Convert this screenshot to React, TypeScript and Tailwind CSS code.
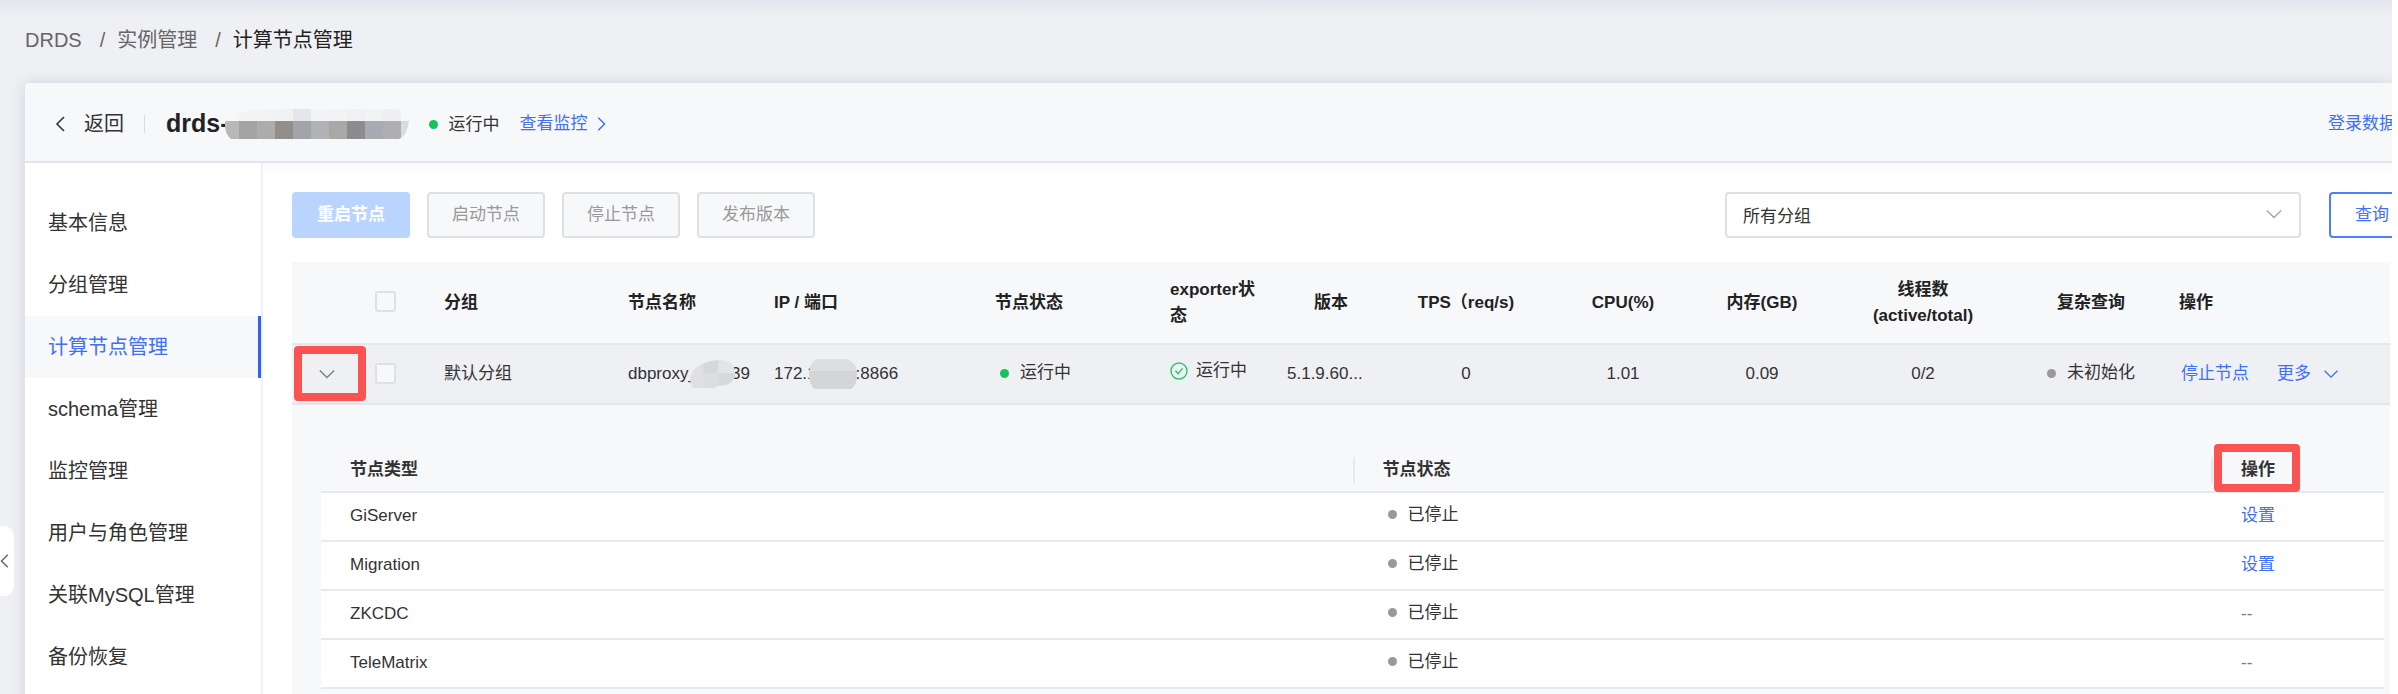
import React from 'react';

type StatusColor = 'green' | 'gray';

interface NodeType {
  name: string;
  status: string;
  configurable: boolean;
}

const menuItems = [
  '基本信息',
  '分组管理',
  '计算节点管理',
  'schema管理',
  '监控管理',
  '用户与角色管理',
  '关联MySQL管理',
  '备份恢复',
];

const nodeTypes: NodeType[] = [
  { name: 'GiServer', status: '已停止', configurable: true },
  { name: 'Migration', status: '已停止', configurable: true },
  { name: 'ZKCDC', status: '已停止', configurable: false },
  { name: 'TeleMatrix', status: '已停止', configurable: false },
];

const chevronPaths = {
  left: 'M12 3 L5 10 L12 17',
  right: 'M7 3 L14 10 L7 17',
  down: 'M2 6 L10 14 L18 6',
};

const Chevron: React.FC<{ dir: keyof typeof chevronPaths; className?: string }> = ({ dir, className }) => (
  <svg viewBox="0 0 20 20" fill="none" stroke="currentColor" strokeWidth="1.6" className={className} aria-hidden="true">
    <path d={chevronPaths[dir]} />
  </svg>
);

const CheckCircle: React.FC = () => (
  <svg viewBox="0 0 18 18" fill="none" stroke="#2fc46b" strokeWidth="1.4" className="w-[18px] h-[18px]" aria-hidden="true">
    <circle cx="9" cy="9" r="8" />
    <path d="M5.4 8.8 L8.2 11.6 L12.6 6.4" />
  </svg>
);

const Status: React.FC<{ color: StatusColor; children: React.ReactNode }> = ({ color, children }) => (
  <span className="inline-flex items-center gap-[11px] whitespace-nowrap">
    <span className={`w-[9px] h-[9px] rounded-full ${color === 'green' ? 'bg-[#16c35b]' : 'bg-[#999999]'}`} />
    {children}
  </span>
);

// Mosaic over the instance id
const topTiles = ['#f5f6f7', '#f3f4f5', '#f2f3f5', '#f1f2f4', '#e5e6e9', '#f3f4f5', '#f2f3f4', '#f0f1f3', '#f2f3f5', '#eeeff0', '#f5f6f7'];
const bottomTiles = ['#b9b7b8', '#a3a3a3', '#acacac', '#928e8c', '#a3a4ab', '#b0b2b5', '#aaa8a6', '#8c8c8e', '#a7abb2', '#b0aeb0', '#d9dbe2'];

const IdMosaic: React.FC = () => (
  <svg width="184" height="30" viewBox="0 0 184 30" aria-hidden="true">
    <defs>
      <clipPath id="id-mosaic">
        <path d="M0 13 L14 3 L40 0 H172 Q177 2 177 12 H184 Q182 27 174 30 H6 Q1 26 0 18 Z" />
      </clipPath>
    </defs>
    <g clipPath="url(#id-mosaic)">
      {topTiles.map((c, i) => (
        <rect key={`t${i}`} x={i * 18 - 4} y="0" width="18" height="12" fill={c} />
      ))}
      {bottomTiles.map((c, i) => (
        <rect key={`b${i}`} x={i * 18 - 4} y="12" width="18" height="18" fill={c} />
      ))}
    </g>
  </svg>
);

const NameMosaic: React.FC = () => (
  <svg width="54" height="34" viewBox="0 0 54 34" className="relative -ml-2 -mr-1" aria-hidden="true">
    <clipPath id="name-mosaic">
      <path d="M0 24 Q2 8 20 3 Q38 -3 50 5 Q56 14 53 22 Q48 31 34 31 L28 34 H4 Q1 31 0 24 Z" />
    </clipPath>
    <g clipPath="url(#name-mosaic)">
      <rect width="54" height="34" fill="#dfe0e2" />
      <rect x="16" width="18" height="16" fill="#d6d7d9" />
      <rect x="34" width="20" height="16" fill="#e3e4e6" />
      <rect x="16" y="16" width="18" height="18" fill="#dcdddf" />
      <rect x="34" y="16" width="20" height="18" fill="#d7d8da" />
    </g>
  </svg>
);

const IpMosaic: React.FC = () => (
  <svg width="48" height="30" viewBox="0 0 48 30" className="relative -ml-2 -mr-px" aria-hidden="true">
    <clipPath id="ip-mosaic">
      <path d="M8 0 H38 Q48 4 48 14 Q48 26 42 30 H6 Q0 26 0 14 Q1 3 8 0 Z" />
    </clipPath>
    <g clipPath="url(#ip-mosaic)">
      <rect width="48" height="30" fill="#dcdee1" />
      <rect y="12" width="48" height="18" fill="#d4d5d7" />
    </g>
  </svg>
);

const Checkbox: React.FC<{ label: string }> = ({ label }) => (
  <input
    type="checkbox"
    aria-label={label}
    className="block appearance-none w-[21px] h-[21px] mb-0.5 rounded-[3px] border-2 border-[#dfe0e3] bg-[#f7f8fa]"
  />
);

const Highlight: React.FC<{ className: string }> = ({ className }) => (
  <span className={`absolute pointer-events-none ${className}`}>
    <span className="block w-full h-full border-8 border-[#fb5252] rounded-[4px]" />
  </span>
);

const NodeTypeTable: React.FC = () => (
  <table className="w-full table-fixed border-collapse text-left">
    <colgroup>
      <col className="w-1/2" />
      <col />
      <col className="w-[173px]" />
    </colgroup>
    <thead>
      <tr className="h-[46px] border-b-2 border-[#e8e9ef]">
        <th className="pl-[29px] pt-0.5 font-bold">节点类型</th>
        <th className="pt-0.5 font-bold">
          <div className="border-l-2 border-[#e8e9ee] pl-7">节点状态</div>
        </th>
        <th className="relative pt-0.5 font-bold">
          <div className="border-l-2 border-[#e8e9ee] pl-7">操作</div>
          <Highlight className="left-[3px] -top-0.5 w-[86px] h-[48px]" />
        </th>
      </tr>
    </thead>
    <tbody>
      {nodeTypes.map((node) => (
        <tr key={node.name} className="h-[49px] bg-white border-b-2 border-[#e8e9ef]">
          <td className="pl-[29px] pb-0.5">{node.name}</td>
          <td className="pl-[35px] pb-1">
            <Status color="gray">{node.status}</Status>
          </td>
          <td className="pl-[30px] pb-0.5">
            {node.configurable ? (
              <a href="#" className="text-[#3e6ff5]">设置</a>
            ) : (
              <span className="text-[#777777]">--</span>
            )}
          </td>
        </tr>
      ))}
    </tbody>
  </table>
);

const NodeTable: React.FC = () => (
  <table className="w-full table-fixed border-collapse text-[17px] leading-[26px] text-[#333333]">
    <colgroup>
      <col className="w-[70px]" />
      <col className="w-[70px]" />
      <col className="w-[184px]" />
      <col className="w-[146px]" />
      <col className="w-[221px]" />
      <col className="w-[175px]" />
      <col className="w-[117px]" />
      <col className="w-[112px]" />
      <col className="w-[158px]" />
      <col className="w-[156px]" />
      <col className="w-[122px]" />
      <col className="w-[200px]" />
      <col className="w-[144px]" />
      <col />
    </colgroup>
    <thead>
      <tr className="h-[82px] bg-[#f7f8fa] border-b-2 border-[#e4e6ec] text-left text-[#222222]">
        <th />
        <th className="px-[13px]"><Checkbox label="全选" /></th>
        <th className="px-3 font-bold">分组</th>
        <th className="px-3 font-bold">节点名称</th>
        <th className="px-3 font-bold">IP / 端口</th>
        <th className="px-3 font-bold">节点状态</th>
        <th className="px-3 font-bold">exporter状态</th>
        <th className="px-3 font-bold text-center">版本</th>
        <th className="px-3 font-bold text-center">TPS（req/s)</th>
        <th className="px-3 font-bold text-center">CPU(%)</th>
        <th className="px-3 font-bold text-center">内存(GB)</th>
        <th className="px-3 font-bold text-center">线程数<br />(active/total)</th>
        <th className="pl-2 pr-4 font-bold text-center">复杂查询</th>
        <th className="px-3 font-bold">操作</th>
      </tr>
    </thead>
    <tbody>
      <tr className="h-[60px] bg-[#eff0f4] border-b-2 border-[#e4e6ec]">
        <td className="relative">
          <button type="button" aria-label="收起" className="block mx-auto text-[#808080]">
            <Chevron dir="down" className="w-[18px] h-[18px]" />
          </button>
          <Highlight className="left-0.5 top-px w-[72px] h-[55px]" />
        </td>
        <td className="px-[13px]"><Checkbox label="选择默认分组" /></td>
        <td className="px-3">默认分组</td>
        <td className="px-3">
          <div className="flex items-center">
            dbproxy_<NameMosaic />39
          </div>
        </td>
        <td className="px-3">
          <div className="flex items-center">
            172.1<IpMosaic />:8866
          </div>
        </td>
        <td className="pl-[17px] pb-0.5"><Status color="green">运行中</Status></td>
        <td className="px-3 pb-0.5">
          <span className="inline-flex items-center gap-2 whitespace-nowrap">
            <CheckCircle />
            运行中
          </span>
        </td>
        <td className="px-3">5.1.9.60...</td>
        <td className="px-3 text-center">0</td>
        <td className="px-3 text-center">1.01</td>
        <td className="px-3 text-center">0.09</td>
        <td className="px-3 text-center">0/2</td>
        <td className="pl-2 pr-4 pb-0.5 text-center"><Status color="gray">未初始化</Status></td>
        <td className="pl-[14px]">
          <div className="flex items-center gap-7 text-[#3e6ff5]">
            <a href="#">停止节点</a>
            <button type="button" className="flex items-center gap-3">
              更多
              <Chevron dir="down" className="w-4 h-4" />
            </button>
          </div>
        </td>
      </tr>
      <tr className="bg-[#f7f8fa]">
        <td colSpan={14} className="pl-[29px] pr-1.5 pt-[41px] pb-5">
          <NodeTypeTable />
        </td>
      </tr>
    </tbody>
  </table>
);

const Toolbar: React.FC = () => (
  <div className="flex items-center gap-[17px] -mr-[25px] text-[17px]">
    <button type="button" className="h-[46px] w-[118px] rounded-[4px] bg-[#b9d5ff] text-white font-bold">重启节点</button>
    <button type="button" disabled className="h-[46px] w-[118px] rounded-[4px] border-2 border-[#dfe0e2] bg-[#f7f8fa] text-[#999999]">启动节点</button>
    <button type="button" disabled className="h-[46px] w-[118px] rounded-[4px] border-2 border-[#dfe0e2] bg-[#f7f8fa] text-[#999999]">停止节点</button>
    <button type="button" disabled className="h-[46px] w-[118px] rounded-[4px] border-2 border-[#dfe0e2] bg-[#f7f8fa] text-[#999999]">发布版本</button>
    <div className="relative ml-auto mr-[11px] w-[576px]">
      <select aria-label="分组" className="block appearance-none w-full h-[46px] rounded-[4px] border-2 border-[#dfe0e2] bg-white pl-4 pt-1 text-[#333333]">
        <option>所有分组</option>
      </select>
      <Chevron dir="down" className="absolute right-[18px] top-[13px] w-[18px] h-[18px] text-[#a6a6a6]" />
    </div>
    <button type="button" className="h-[46px] w-[86px] shrink-0 rounded-[4px] border-2 border-[#4f7ff7] bg-white text-[#3e6ff5]">查询</button>
  </div>
);

const App: React.FC = () => (
  <div className="min-h-screen flex bg-white pr-1.5 font-['Liberation_Sans','Noto_Sans_CJK_SC',sans-serif] text-[#333333]">
    <div className="relative flex-1 min-w-0 flex flex-col overflow-hidden bg-[#eff0f4] pl-[25px]">
      <div className="absolute inset-x-0 top-0 h-4 bg-linear-to-b from-[#e3e6f0] to-[#eff0f4]" />
      <nav className="relative flex items-center h-[83px] pb-1 text-[20px] text-[#666666]">
        <a href="#">DRDS</a>
        <span className="ml-[18px] mr-3">/</span>
        <a href="#">实例管理</a>
        <span className="ml-[18px] mr-3">/</span>
        <span className="text-[#222222]">计算节点管理</span>
      </nav>

      <div className="relative flex-1 flex flex-col rounded-tl-[4px] bg-white shadow-[0_0_14px_rgba(60,70,110,0.16)]">
        <header className="flex items-center h-[80px] pl-[27px] pt-1 rounded-tl-[4px] bg-[#f7f8fa] border-b-2 border-[#e1e4ee]">
          <button type="button" className="flex items-center gap-3 text-[20px]">
            <Chevron dir="left" className="w-5 h-5" />
            返回
          </button>
          <span className="w-px h-[18px] ml-[20px] mr-[21px] bg-[#d9dce6]" />
          <h1 className="flex items-center text-[25px] font-bold text-[#222222]">
            drds-
            <span className="relative -ml-1"><IdMosaic /></span>
          </h1>
          <span className="ml-5 text-[17px]"><Status color="green">运行中</Status></span>
          <a href="#" className="flex items-center ml-5 text-[17px] text-[#3e6ff5]">
            查看监控
            <Chevron dir="right" className="w-[18px] h-[18px] ml-1" />
          </a>
          <a href="#" className="ml-auto -mr-1 shrink-0 text-[17px] text-[#3e6ff5]">登录数据</a>
        </header>

        <div className="flex-1 flex">
          <aside className="w-[238px] shrink-0 pt-[29px] border-r-2 border-[#f0f1f4]">
            {menuItems.map((item) => (
              <a
                key={item}
                href="#"
                className={
                  item === '计算节点管理'
                    ? 'flex items-center h-[62px] pl-[23px] text-[20px] bg-[#f7f8fa] border-r-3 border-[#2f62f0] text-[#3e6ff5]'
                    : 'flex items-center h-[62px] pl-[23px] text-[20px] text-[#333333]'
                }
              >
                {item}
              </a>
            ))}
          </aside>
          <main className="flex-1 min-w-0 pl-[29px] pr-0.5 pt-[29px] bg-linear-to-b from-[#fafafb] via-white via-3% to-white">
            <Toolbar />
            <div className="mt-6">
              <NodeTable />
            </div>
          </main>
        </div>
      </div>

      <button
        type="button"
        aria-label="收起菜单"
        className="absolute left-0 top-[526px] flex items-center w-[14px] h-[70px] rounded-r-[10px] bg-white text-[#666666]"
      >
        <Chevron dir="left" className="w-[18px] h-[18px] shrink-0 -ml-[3px]" />
      </button>
    </div>
  </div>
);

export default App;
